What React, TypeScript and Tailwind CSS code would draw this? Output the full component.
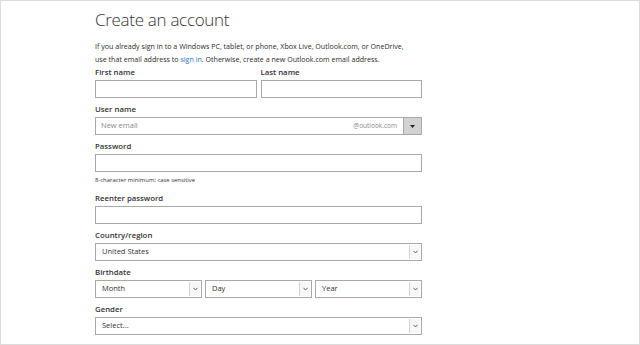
import React from "react";

const Chevron: React.FC = () => (
    <div className="flex h-full w-[11px] items-center justify-center border-l border-[#d4d4d4] bg-[#f7f7f7]">
        <svg width="5" height="4" viewBox="0 0 5 4">
            <path d="M0.5 0.8 L2.5 3 L4.5 0.8" fill="none" stroke="#555" strokeWidth="0.9" />
        </svg>
    </div>
);

const Label: React.FC<{ children: React.ReactNode }> = ({ children }) => (
    <div className="h-[14px] text-[7.8px] leading-[14px] font-semibold text-[#333]">{children}</div>
);

const TextBox: React.FC<{ className?: string }> = ({ className = "" }) => (
    <div className={`mt-[1px] h-[18px] border border-[#a9a9a9] bg-white ${className}`}></div>
);

const SelectBox: React.FC<{ value: string; className?: string }> = ({ value, className = "" }) => (
    <div className={`mt-[1px] flex h-[18px] items-center border border-[#a9a9a9] bg-white pr-px ${className}`}>
        <span className="flex-1 pl-[6px] text-[7.5px] text-[#333]">{value}</span>
        <div className="h-[14px]">
            <Chevron />
        </div>
    </div>
);

export default function App() {
    return (
        <div
            className="h-[345px] w-[640px] overflow-hidden border border-[#dcdcdc] bg-white"
            style={{ fontFamily: '"Open Sans", "Noto Sans", sans-serif' }}
        >
            <div className="w-[421px] pl-[94px] pt-[5px]">
                {/* titulo */}
                <h1 className="h-[27px] text-[17px] leading-[27px] font-light tracking-[-0.3px] text-[#333]">Create an account</h1>

                <p className="mt-[7px] mb-[-1px] text-[7.1px] leading-[13px] text-[#2b2b2b]">
                    If you already sign in to a Windows PC, tablet, or phone, Xbox Live, Outlook.com, or OneDrive,
                    <br />
                    use that email address to <span className="text-[#2b7bbf]">sign in</span>. Otherwise, create a new Outlook.com email address.
                </p>

                {/* nombre */}
                <div className="flex gap-[4px]">
                    <div className="flex-1">
                        <Label>First name</Label>
                        <TextBox />
                    </div>
                    <div className="flex-1">
                        <Label>Last name</Label>
                        <TextBox />
                    </div>
                </div>

                <div className="mt-[4px]">
                    <Label>User name</Label>
                    <div className="mt-[1px] flex h-[18px] border border-[#a9a9a9] bg-white">
                        <span className="flex flex-1 items-center pl-[5px] text-[7.5px] text-[#8a8a8a]">New email</span>
                        <span className="flex items-center pr-[6px] text-[6.5px] text-[#8a8a8a]">@outlook.com</span>
                        <div className="flex w-[18px] items-center justify-center border-l border-[#a9a9a9] bg-[#d2d2d2]">
                            <svg width="5" height="3" viewBox="0 0 5 3">
                                <path d="M0 0 H5 L2.5 3 Z" fill="#222" />
                            </svg>
                        </div>
                    </div>
                </div>

                <div className="mt-[4px]">
                    <Label>Password</Label>
                    <TextBox />
                    <div className="mt-[2px] h-[12px] text-[5.9px] leading-[12px] text-[#333]">8-character minimum; case sensitive</div>
                </div>

                <div className="mt-[5px]">
                    <Label>Reenter password</Label>
                    <TextBox />
                </div>

                <div className="mt-[4px]">
                    <Label>Country/region</Label>
                    <SelectBox value="United States" />
                </div>

                <div className="mt-[4px]">
                    <Label>Birthdate</Label>
                    <div className="flex gap-[3px]">
                        <SelectBox value="Month" className="flex-1" />
                        <SelectBox value="Day" className="flex-1" />
                        <SelectBox value="Year" className="flex-1" />
                    </div>
                </div>

                <div className="mt-[4px]">
                    <Label>Gender</Label>
                    <SelectBox value="Select..." />
                </div>
            </div>
        </div>
    );
}
